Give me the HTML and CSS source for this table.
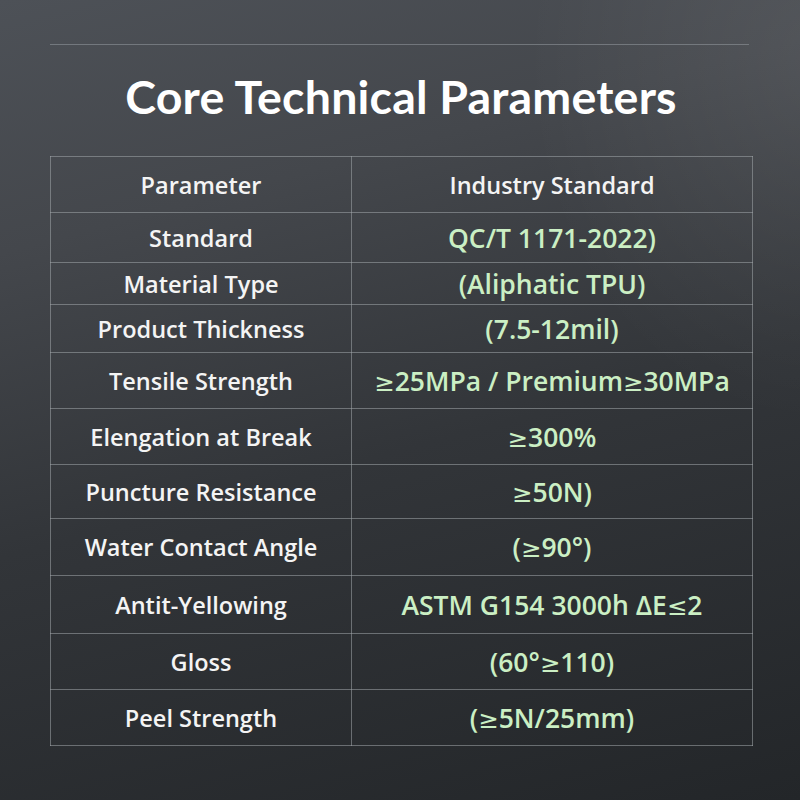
FILE: index.html
```html
<!DOCTYPE html>
<html lang="en">
<head>
<meta charset="utf-8">
<title>Core Technical Parameters</title>
<link rel="stylesheet" href="styles.css">
</head>
<body>
<main class="page">
  <div class="rule"></div>
  <h1 class="title">Core Technical Parameters</h1>
  <table class="params">
    <thead>
      <tr class="r56"><th>Parameter</th><th>Industry Standard</th></tr>
    </thead>
    <tbody>
      <tr class="r50"><td>Standard</td><td class="val">QC/T 1171-2022)</td></tr>
      <tr class="r42"><td>Material Type</td><td class="val">(Aliphatic TPU)</td></tr>
      <tr class="r48"><td>Product Thickness</td><td class="val">(7.5-12mil)</td></tr>
      <tr class="r56"><td>Tensile Strength</td><td class="val"><span class="sym">≥</span>25MPa / Premium<span class="sym">≥</span>30MPa</td></tr>
      <tr class="r56"><td>Elengation at Break</td><td class="val"><span class="sym">≥</span>300%</td></tr>
      <tr class="r54"><td>Puncture Resistance</td><td class="val"><span class="sym">≥</span>50N)</td></tr>
      <tr class="r57"><td>Water Contact Angle</td><td class="val">(<span class="sym">≥</span>90°)</td></tr>
      <tr class="r58"><td>Antit-Yellowing</td><td class="val">ASTM G154 3000h ΔE<span class="sym">≤</span>2</td></tr>
      <tr class="r56"><td>Gloss</td><td class="val">(60°<span class="sym">≥</span>110)</td></tr>
      <tr class="r56"><td>Peel Strength</td><td class="val">(<span class="sym">≥</span>5N/25mm)</td></tr>
    </tbody>
  </table>
</main>
</body>
</html>
```

FILE: styles.css
```css
html, body {
  margin: 0;
  padding: 0;
}
body {
  width: 800px;
  height: 800px;
  overflow: hidden;
  background: linear-gradient(165deg, #4d5157 0%, #44474c 25%, #323539 55%, #232629 100%);
  font-family: "Open Sans", "Liberation Sans", sans-serif;
  color: #ffffff;
}
.page {
  position: relative;
  width: 800px;
  height: 800px;
  box-sizing: border-box;
  padding: 44px 48px 0 50px;
  background: radial-gradient(ellipse 420px 520px at 820px 60px, rgba(255,255,255,0.08), rgba(255,255,255,0) 70%);
}
.rule {
  height: 1px;
  width: 699px;
  background: rgba(150, 155, 160, 0.55);
}
.title {
  margin: 0;
  padding-top: 23px;
  height: 86px;
  box-sizing: border-box;
  text-align: center;
  font-family: "Lato", "Open Sans", sans-serif;
  font-weight: 700;
  font-size: 46.5px;
  line-height: 56px;
  color: #ffffff;
  letter-spacing: 0.2px;
}
.params {
  margin-top: 25px;
  border-collapse: collapse;
  width: 703px;
  table-layout: fixed;
}
.params th, .params td {
  border: 1px solid rgba(160, 165, 170, 0.55);
  padding: 0;
  text-align: center;
  vertical-align: middle;
  font-size: 23.5px;
  font-weight: 600;
  color: #f4f4f4;
  white-space: nowrap;
}
.params th:first-child, .params td:first-child {
  width: 300px;
}
.params .val {
  color: #cbefc4;
  font-size: 26.5px;
}
.sym {
  font-family: "DejaVu Sans", sans-serif;
  font-weight: 400;
  font-size: 0.92em;
}
.r42 { height: 42px; }
.r48 { height: 48px; }
.r50 { height: 50px; }
.r54 { height: 54px; }
.r56 { height: 56px; }
.r57 { height: 57px; }
.r58 { height: 58px; }
```
